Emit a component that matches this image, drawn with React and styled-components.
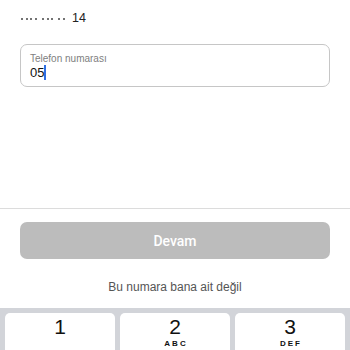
import React from "react";
import styled, { createGlobalStyle } from "styled-components";

const Global = createGlobalStyle`
  html, body { margin: 0; padding: 0; background: #fff; }
  body { font-family: "Liberation Sans", Arial, sans-serif; -webkit-font-smoothing: antialiased; }
  * { box-sizing: border-box; }
`;

const Page = styled.div`
  width: 350px;
  height: 350px;
  overflow: hidden;
  display: flex;
  flex-direction: column;
  background: #fff;
`;

const Top = styled.div`
  padding: 10px 20px 0 21px;
  height: 208px;
  display: flex;
  flex-direction: column;
`;

const Masked = styled.div`
  display: flex;
  align-items: center;
  height: 16px;
  color: #222;
  font-size: 12.5px;
`;

const DotGroup = styled.span`
  display: flex;
  gap: 2.4px;
  margin-right: 5px;
  margin-top: 2px;
`;

const Dot = styled.span`
  width: 2.2px;
  height: 2.2px;
  border-radius: 50%;
  background: #444;
`;

const Tail = styled.span`
  margin-left: 2px;
`;

const Field = styled.div`
  margin: 18px 0 0 -1px;
  height: 43px;
  border: 1px solid #c6c6c6;
  border-radius: 7px;
  padding: 7px 9px 0 9px;
  display: flex;
  flex-direction: column;
`;

const Label = styled.div`
  font-size: 10px;
  color: #808080;
  line-height: 13px;
`;

const Value = styled.div`
  font-size: 13px;
  color: #111;
  line-height: 15px;
  display: flex;
  align-items: center;
`;

const Caret = styled.span`
  display: inline-block;
  width: 1.5px;
  height: 15px;
  background: #2f6fe4;
`;

const Divider = styled.div`
  height: 1px;
  background: #dcdcdc;
`;

const Bottom = styled.div`
  padding: 13px 20px 0 20px;
  display: flex;
  flex-direction: column;
  align-items: stretch;
`;

const Button = styled.button`
  height: 37px;
  border: none;
  border-radius: 7px;
  background: #bcbcbc;
  color: #fff;
  font-family: Roboto, "Liberation Sans", Arial, sans-serif;
  font-size: 14px;
  font-weight: 500;
  padding: 0;
`;

const Link = styled.div`
  margin-top: 20px;
  text-align: center;
  font-size: 12px;
  color: #555;
  line-height: 16px;
`;

const Keyboard = styled.div`
  margin-top: auto;
  height: 42px;
  background: #d2d4d9;
  padding: 5px 5px 0 5px;
  display: grid;
  grid-template-columns: repeat(3, 1fr);
  gap: 5px;
`;

const Key = styled.div`
  background: #fff;
  border-radius: 5px 5px 0 0;
  display: flex;
  flex-direction: column;
  align-items: center;
  padding-top: 3px;
`;

const Digit = styled.div`
  font-family: "Liberation Sans", Arial, sans-serif;
  font-size: 21px;
  line-height: 22px;
  color: #111;
`;

const Letters = styled.div`
  font-size: 8px;
  font-weight: 700;
  letter-spacing: 2px;
  color: #111;
  line-height: 10px;
  padding-left: 2px;
  margin-top: 1px;
`;

const groups = [4, 3, 2];

export default function App() {
  return (
    <>
      <Global />
      <Page>
        <Top>
          <Masked>
            {groups.map((n, i) => (
              <DotGroup key={i}>
                {Array.from({ length: n }).map((_, j) => (
                  <Dot key={j} />
                ))}
              </DotGroup>
            ))}
            <Tail>14</Tail>
          </Masked>
          <Field>
            <Label>Telefon numarası</Label>
            <Value>
              05<Caret />
            </Value>
          </Field>
        </Top>
        <Divider />
        <Bottom>
          <Button>Devam</Button>
          <Link>Bu numara bana ait değil</Link>
        </Bottom>
        <Keyboard>
          <Key>
            <Digit>1</Digit>
          </Key>
          <Key>
            <Digit>2</Digit>
            <Letters>ABC</Letters>
          </Key>
          <Key>
            <Digit>3</Digit>
            <Letters>DEF</Letters>
          </Key>
        </Keyboard>
      </Page>
    </>
  );
}
